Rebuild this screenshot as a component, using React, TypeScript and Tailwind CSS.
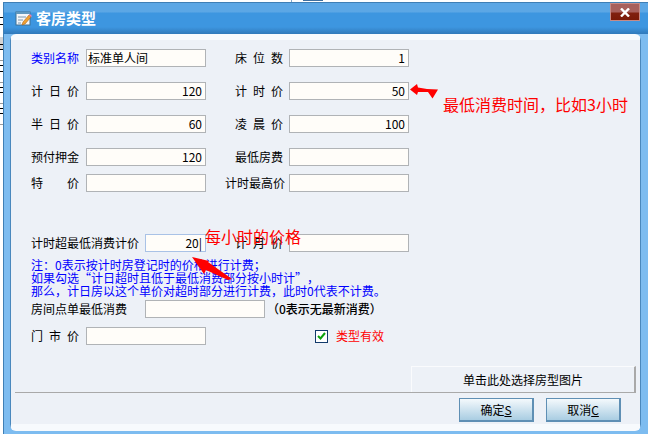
const font = { fontFamily: '"Noto Sans CJK SC", "Liberation Sans", sans-serif' };

function Box({ width = "w-[120px]", value, blue }: { width?: string; value?: string; blue?: boolean }) {
  return (
    <div
      className={`${width} h-[18px] shrink-0 border ${blue ? "border-[#a9c2e6]" : "border-[#b0b3b6]"} bg-[#fffdf9] px-[3px] text-right text-[12px] leading-[16px] text-black`}
    >
      {value}
    </div>
  );
}

function Spaced({ text, width = "w-[48px]" }: { text: string; width?: string }) {
  return (
    <div className={`${width} flex shrink-0 justify-between text-[12px] leading-[18px] text-black`}>
      {text.split("").map((c, i) => (
        <span key={i}>{c}</span>
      ))}
    </div>
  );
}

function Row({ className, children }: { className: string; children: React.ReactNode }) {
  return <div className={`flex h-[18px] items-center pl-[16px] ${className}`}>{children}</div>;
}

function Right({ label, value }: { label: string; value?: string }) {
  const long = label.length > 4;
  return (
    <div className={`ml-[20px] flex w-[183px] shrink-0 items-center justify-end ${long ? "gap-[4px]" : "gap-[6px]"}`}>
      <Spaced text={label} width={long ? "w-[60px]" : "w-[48px]"} />
      <Box value={value} />
    </div>
  );
}

function DialogButton({ label, hot }: { label: string; hot: string }) {
  return (
    <div className="flex h-[24px] w-[75px] items-center justify-center border border-[#5f8fb4] border-b-2 border-r-2 bg-gradient-to-b from-[#f4f9fc] to-[#a9cde2] text-[12px] text-black">
      {label}
      <span className="underline">{hot}</span>
    </div>
  );
}

export default function App() {
  return (
    <div lang="zh-CN" className="relative h-[434px] w-[648px] overflow-hidden bg-white" style={font}>
      {/* Table of the main window, showing behind the dialog */}
      <div className="absolute left-0 top-[37px] h-[13px] w-[3px] bg-[#d4d4d4]" />
      <div className="absolute left-0 top-[17px] h-[8px] w-[3px] border-y border-black" />
      <div className="absolute left-0 top-[44px] h-[6px] w-[3px] border-y border-black" />
      <div className="absolute left-0 top-[60px] h-[1px] w-[3px] bg-[#9a9a9a]" />
      <div className="absolute left-0 top-[65px] h-[7px] w-[3px] border-y border-black" />
      <div className="absolute left-0 top-[82px] h-[1px] w-[3px] bg-[#9a9a9a]" />
      <div className="absolute left-0 top-[87px] h-[6px] w-[3px] border-y border-black" />
      <div className="absolute left-0 top-[103px] h-[1px] w-[3px] bg-[#9a9a9a]" />
      <div className="absolute left-0 top-[108px] h-[6px] w-[3px] border-y border-black" />
      <div className="absolute left-0 top-[124px] h-[1px] w-[3px] bg-[#9a9a9a]" />
      <div className="absolute left-[291px] top-0 h-[2px] w-[1px] bg-[#7fa8cc]" />
      <div className="absolute left-[303px] top-0 h-[1px] w-[20px] bg-[#3f6f9f]" />

      <div className="relative ml-[3px] mt-[2px] flex h-[432px] w-[645px] flex-col border-l border-t border-[#3f7fb5] bg-[#7dbcf0]">
        {/* Title bar */}
        <div className="flex h-[31px] shrink-0 items-start bg-[linear-gradient(#5ca7e5_0,#5ca7e5_9px,#3d96e0_10px,#3d96e0_24px,#3079ba_31px)] pl-[11px] pt-[6px]">
          <svg width="18" height="18" viewBox="0 0 18 18" className="mt-[1px] shrink-0">
            <rect x="1" y="2" width="14" height="13" fill="#f3f6fa" stroke="#3f7193" />
            <rect x="1" y="2" width="14" height="2" fill="#5f97bd" />
            <path d="M3 7h8M3 10h5M3 13h3" stroke="#7c96aa" />
            <path d="M7 15l1-3 6-7 2 2-6 7z" fill="#f0a030" stroke="#a9651a" strokeWidth=".6" />
            <path d="M14 5l1-1 2 2-1 1z" fill="#e87fb0" />
          </svg>
          <span className="ml-[3px] text-[15px] font-bold leading-[18px] text-white">客房类型</span>
          <div className="ml-auto mr-[8px] mt-[-6px] flex h-[18px] w-[30px] items-center justify-center border border-[#c58a86] bg-[linear-gradient(#a8605c_0,#a8605c_8px,#80200f_9px,#7a1a08_100%)]">
            <svg width="10" height="9" viewBox="0 0 10 9">
              <path d="M1 .5l8 8M9 .5l-8 8" stroke="#fff" strokeWidth="2.4" />
            </svg>
          </div>
        </div>

        {/* Panel */}
        <div className="ml-[6px] mr-[7px] flex h-[397px] flex-col rounded-t-[6px] rounded-b-[6px] border-b-[7px] border-l border-r border-t-[6px] border-[#f7fafd] border-l-[#4a88bd] border-r-[#4a88bd] bg-[#edf1f7] pl-[4px] pr-[4px]">
          <Row className="mt-[9px]">
            <div className="w-[48px] shrink-0 text-[12px] leading-[18px] text-[#0000ff]">类别名称</div>
            <div className="ml-[7px] h-[18px] w-[120px] shrink-0 border border-[#b0b3b6] bg-[#fffdf9] px-[1px] text-[12px] leading-[16px] text-black">
              标准单人间
            </div>
            <Right label="床位数" value="1" />
          </Row>
          <Row className="mt-[15px]">
            <Spaced text="计日价" />
            <div className="ml-[7px]"><Box value="120" /></div>
            <Right label="计时价" value="50" />
          </Row>
          <Row className="mt-[15px]">
            <Spaced text="半日价" />
            <div className="ml-[7px]"><Box value="60" /></div>
            <Right label="凌晨价" value="100" />
          </Row>
          <Row className="mt-[15px]">
            <Spaced text="预付押金" />
            <div className="ml-[7px]"><Box value="120" /></div>
            <Right label="最低房费" />
          </Row>
          <Row className="mt-[8px]">
            <Spaced text="特价" />
            <div className="ml-[7px]"><Box /></div>
            <Right label="计时最高价" />
          </Row>
          <Row className="mt-[42px]">
            <div className="w-[114px] shrink-0 text-[12px] leading-[18px] text-black">计时超最低消费计价</div>
            <Box width="w-[61px]" value="20|" blue />
            <Right label="计月价" />
          </Row>
          <div className="mt-[6px] pl-[16px] text-[12px] leading-[13px] text-[#0000ff] [text-spacing-trim:space-all]">
            <p>注：0表示按计时房登记时的价格进行计费；</p>
            <p>如果勾选“计日超时且低于最低消费部分按小时计”，</p>
            <p>那么，计日房以这个单价对超时部分进行计费，此时0代表不计费。</p>
          </div>
          <Row className="mt-[3px]">
            <div className="w-[114px] shrink-0 text-[12px] leading-[18px] text-black">房间点单最低消费</div>
            <Box />
            <div className="ml-[2px] whitespace-nowrap text-[12px] font-medium leading-[18px] text-black [text-spacing-trim:space-all]">（0表示无最新消费）</div>
          </Row>
          <Row className="mt-[9px]">
            <Spaced text="门市价" />
            <div className="ml-[7px]"><Box /></div>
            <div className="ml-[109px] flex h-[13px] w-[13px] shrink-0 items-center justify-center border border-[#123a6b] bg-white">
              <svg width="9" height="8" viewBox="0 0 9 8">
                <path d="M1 4l2.5 2.5L8 1" fill="none" stroke="#0ca30c" strokeWidth="2" />
              </svg>
            </div>
            <div className="ml-[8px] text-[12px] leading-[18px] text-[#ff0000]">类型有效</div>
          </Row>

          <div className="mt-[21px] ml-auto flex h-[26px] w-[225px] items-center justify-center border-l border-r-2 border-t border-l-[#fafbfd] border-r-[#a9a9a9] border-t-[#fafbfd] text-[12px] text-black">
            单击此处选择房型图片
          </div>
          <div className="h-[1px] shrink-0 bg-[#a9a9a9]" />
          <div className="mr-[15px] mt-[5px] flex justify-end gap-[12px]">
            <DialogButton label="确定" hot="S" />
            <DialogButton label="取消" hot="C" />
          </div>
        </div>
      </div>

      {/* Red annotations */}
      <div className="absolute left-[443px] top-[94px] text-[16px] leading-[20px] text-[#ff0000]">最低消费时间，比如3小时</div>
      <div className="absolute left-[205px] top-[226px] text-[16px] leading-[20px] text-[#ff0000]">每小时的价格</div>
      <svg className="absolute left-[408px] top-[82px]" width="32" height="18" viewBox="0 0 32 18">
        <path d="M2 7.5L9 2l1 3.5 9 1.5 11 .5-5.5 9-4.5-6.5H10L9 13z" fill="#ff0000" />
      </svg>
      <svg className="absolute left-[190px] top-[252px]" width="44" height="32" viewBox="0 0 44 32">
        <path d="M2 5l17 4-1 1 24 17-4 1-22-10-2 4z" fill="#ff0000" />
      </svg>
    </div>
  );
}
